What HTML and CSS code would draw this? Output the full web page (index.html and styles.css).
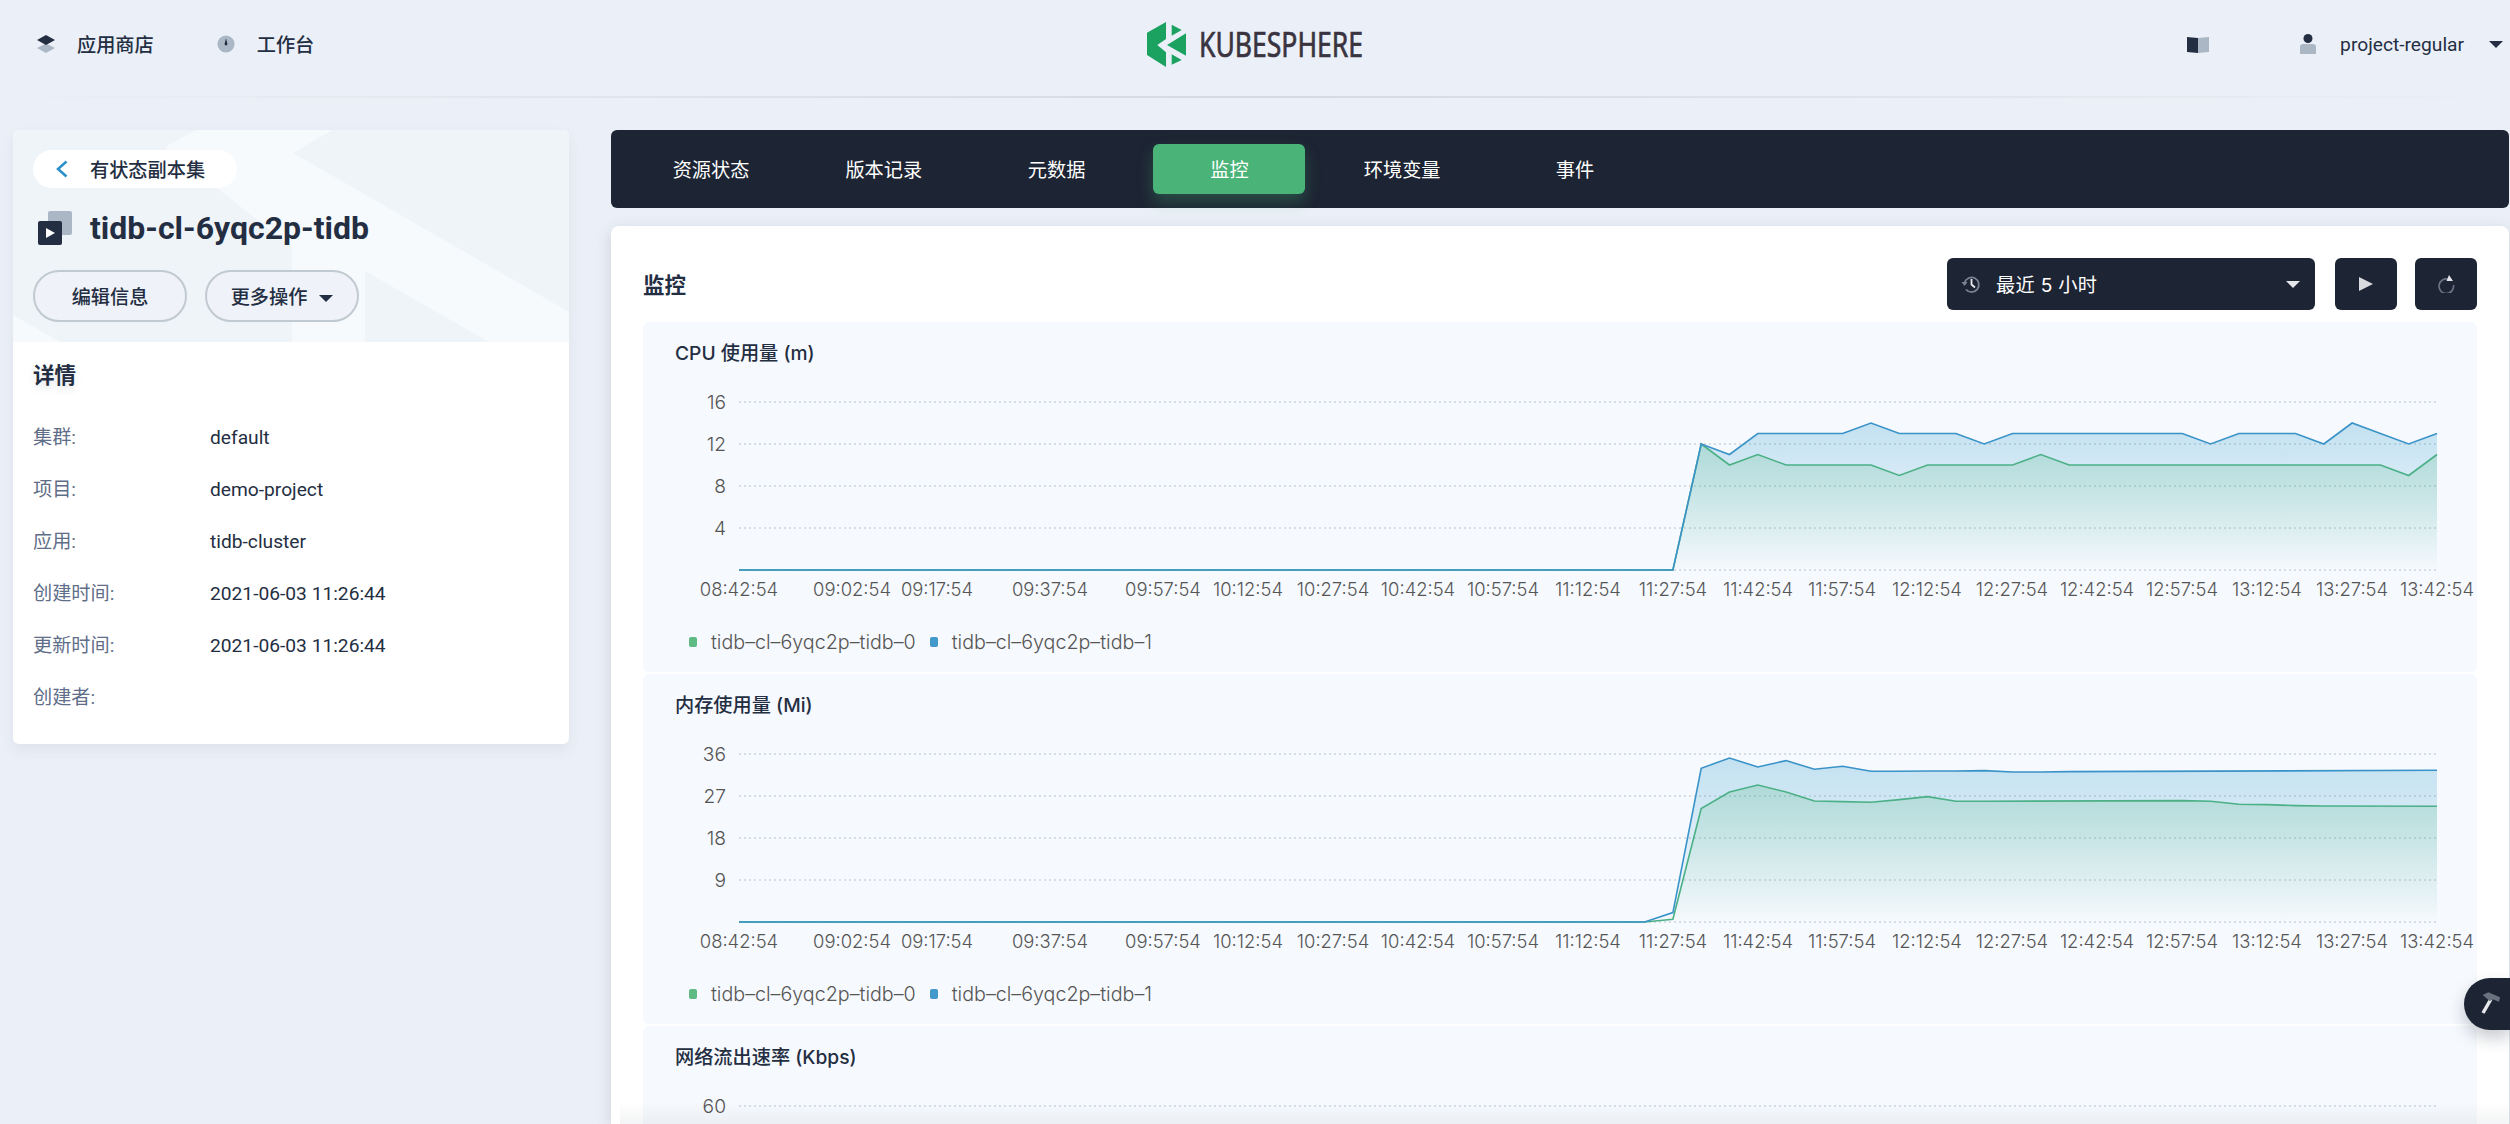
FILE: index.html
```html
<!DOCTYPE html>
<html lang="en">
<head>
    <meta charset="UTF-8">
    <meta name="viewport" content="width=device-width, initial-scale=1.0">
    <title>tidb-cl-6yqc2p-tidb</title>
    <link rel="stylesheet" href="styles.css">
</head>
<body>

    <header class="topbar">
        <nav class="topbar-left">
            <a class="top-link">
                <svg class="top-icon" viewBox="0 0 20 18">
                    <path d="M10 8.6 1 13l9 5 9-5z" fill="#abb7c5"/>
                    <path d="M10 0 1 5l9 5 9-5z" fill="#242e42"/>
                </svg>
                <span>应用商店</span>
            </a>
            <a class="top-link">
                <svg class="top-icon" viewBox="0 0 20 20">
                    <circle cx="10" cy="10" r="9.5" fill="#abb7c5"/>
                    <path d="M10 3.5 11.6 10a1.6 1.6 0 1 1-3.2 0z" fill="#242e42"/>
                </svg>
                <span>工作台</span>
            </a>
        </nav>

        <div class="logo">
            <svg class="logo-mark" viewBox="0 0 40 45">
                <path d="M19 0 0 10.7V33L19 45V30.300L10.300 23 19 17z" fill="#1ba160"/>
                <path d="M24.700 2.700 34.700 8 24.700 13.700z" fill="#1ba160"/>
                <path d="M39 11.300V33.700L20 23z" fill="#1ba160"/>
                <path d="M24.700 32.300 34.700 38 24.700 42.700z" fill="#1ba160"/>
            </svg>
            <span class="logo-text">KUBESPHERE</span>
        </div>

        <div class="topbar-right">
            <svg class="book-icon" viewBox="0 0 22 17">
                <path d="M0 1 11 2v15L0 16z" fill="#242e42"/>
                <path d="M11 2 22 1v15l-11 1z" fill="#abb7c5"/>
            </svg>
            <svg class="user-icon" viewBox="0 0 16 20">
                <circle cx="8" cy="4.5" r="4.5" fill="#242e42"/>
                <path d="M0 13q0-3 3-3h10q3 0 3 3v7H0z" fill="#abb7c5"/>
            </svg>
            <span class="user-name">project-regular</span>
            <span class="caret caret-dark"></span>
        </div>
    </header>

    <main class="page">
        <aside class="side">
            <section class="side-head">
                <svg class="side-bg" viewBox="0 0 556 212" preserveAspectRatio="none">
                    <path d="M183 0H319L280 23 556 182V212H476L352 141V212H279V117L152 17z" fill="#f6fafd"/>
                    <path d="M0 185 47 212H0z" fill="#f6fafd"/>
                </svg>
                <a class="back-pill">
                    <svg class="back-icon" viewBox="0 0 12 18">
                        <path d="M10.5 1.5 2 9l8.500 7.500" fill="none" stroke="#2b8fc9" stroke-width="2.5"/>
                    </svg>
                    <span>有状态副本集</span>
                </a>
                <div class="side-title">
                    <svg class="title-icon" viewBox="0 0 34 34">
                        <rect x="10" y="0" width="24" height="24" rx="2" fill="#abb7c5"/>
                        <rect x="0" y="10" width="24" height="24" rx="2" fill="#242e42"/>
                        <path d="M8 17 17 22 8 27z" fill="#fff"/>
                    </svg>
                    <h1>tidb-cl-6yqc2p-tidb</h1>
                </div>
                <div class="side-actions">
                    <button class="pill-btn">编辑信息</button>
                    <button class="pill-btn">更多操作<span class="caret caret-dark caret-btn"></span></button>
                </div>
            </section>
            <section class="details">
                <h3>详情</h3>
                <dl>
                    <div class="row"><dt>集群:</dt><dd>default</dd></div>
                    <div class="row"><dt>项目:</dt><dd>demo-project</dd></div>
                    <div class="row"><dt>应用:</dt><dd>tidb-cluster</dd></div>
                    <div class="row"><dt>创建时间:</dt><dd>2021-06-03 11:26:44</dd></div>
                    <div class="row"><dt>更新时间:</dt><dd>2021-06-03 11:26:44</dd></div>
                    <div class="row"><dt>创建者:</dt><dd></dd></div>
                </dl>
            </section>
        </aside>

        <div class="content">
            <nav class="tabs">
                <a class="tab">资源状态</a>
                <a class="tab">版本记录</a>
                <a class="tab">元数据</a>
                <a class="tab active">监控</a>
                <a class="tab">环境变量</a>
                <a class="tab">事件</a>
            </nav>

            <section class="card">
                <div class="card-head">
                    <h2>监控</h2>
                    <div class="controls">
                        <div class="time-select">
                            <svg class="clock" viewBox="0 0 20 20">
                                <path d="M3.600 8.500A7.300 7.300 0 1 1 5 15.500" fill="none" stroke="#7b8391" stroke-width="1.8"/>
                                <path d="M0.500 8 6.500 8 3.500 12z" fill="#7b8391"/>
                                <path d="M10.500 5V10.500L14 13.500" fill="none" stroke="#e8eaed" stroke-width="1.8"/>
                            </svg>
                            <span class="time-text">最近 5 小时</span>
                            <span class="caret caret-light caret-end"></span>
                        </div>
                        <button class="icon-btn">
                            <svg class="play" viewBox="0 0 14 14"><path d="M0 0 14 7 0 14z" fill="#d8dadd"/></svg>
                        </button>
                        <button class="icon-btn">
                            <svg class="refresh" viewBox="0 0 18 18">
                                <path d="M11.500 4.200A7.300 7.300 0 1 0 16.500 10" fill="none" stroke="#6d7585" stroke-width="1.6"/>
                                <path d="M12 0 16 6H9.500z" fill="#e4e6ea"/>
                            </svg>
                        </button>
                    </div>
                </div>

                <div class="panel">
                    <div class="panel-title">CPU 使用量 (m)</div>
                    <svg class="chart" viewBox="0 0 1834 230">
                        <defs>
                            <linearGradient id="fillBlue" x1="0" y1="0" x2="0" y2="1">
                                <stop offset="0" stop-color="#329dce" stop-opacity="0.26"/>
                                <stop offset="1" stop-color="#329dce" stop-opacity="0"/>
                            </linearGradient>
                            <linearGradient id="fillGreen" x1="0" y1="0" x2="0" y2="1">
                                <stop offset="0" stop-color="#4ab377" stop-opacity="0.22"/>
                                <stop offset="1" stop-color="#4ab377" stop-opacity="0"/>
                            </linearGradient>
                        </defs>
                        <g class="grid">
                            <line x1="96" x2="1794" y1="22" y2="22"/>
                            <line x1="96" x2="1794" y1="64" y2="64"/>
                            <line x1="96" x2="1794" y1="106" y2="106"/>
                            <line x1="96" x2="1794" y1="148" y2="148"/>
                            <line x1="96" x2="1794" y1="190" y2="190"/>
                        </g>
                        <g class="y-axis">
                            <text x="83" y="29">16</text>
                            <text x="83" y="71">12</text>
                            <text x="83" y="113">8</text>
                            <text x="83" y="155">4</text>
                        </g>
                        <path d="M1029.900,190L1058.200,64L1086.500,74.500L1114.800,53.500L1143.100,53.500L1171.400,53.500L1199.700,53.500L1228,43L1256.300,53.500L1284.600,53.500L1312.900,53.500L1341.200,64L1369.500,53.500L1397.800,53.500L1426.100,53.500L1454.400,53.500L1482.700,53.500L1511,53.500L1539.300,53.500L1567.600,64L1595.900,53.500L1624.200,53.500L1652.500,53.500L1680.800,64L1709.100,43L1737.400,53.500L1765.700,64L1794,53.500V190z" fill="url(#fillBlue)"/>
                        <path d="M1029.900,190L1058.200,64L1086.500,85L1114.800,74.500L1143.100,85L1171.400,85L1199.700,85L1228,85L1256.300,95.500L1284.600,85L1312.900,85L1341.200,85L1369.500,85L1397.800,74.500L1426.100,85L1454.400,85L1482.700,85L1511,85L1539.300,85L1567.600,85L1595.900,85L1624.200,85L1652.500,85L1680.800,85L1709.100,85L1737.400,85L1765.700,95.500L1794,74.500V190z" fill="url(#fillGreen)"/>
                        <path class="line-green" d="M96,190H1029.900L1058.200,64L1086.500,85L1114.800,74.500L1143.100,85L1171.400,85L1199.700,85L1228,85L1256.300,95.500L1284.600,85L1312.900,85L1341.200,85L1369.500,85L1397.800,74.500L1426.100,85L1454.400,85L1482.700,85L1511,85L1539.300,85L1567.600,85L1595.900,85L1624.200,85L1652.500,85L1680.800,85L1709.100,85L1737.400,85L1765.700,95.500L1794,74.500"/>
                        <path class="line-blue" d="M96,190H1029.900L1058.200,64L1086.500,74.500L1114.800,53.500L1143.100,53.500L1171.400,53.500L1199.700,53.500L1228,43L1256.300,53.500L1284.600,53.500L1312.900,53.500L1341.200,64L1369.500,53.500L1397.800,53.500L1426.100,53.500L1454.400,53.500L1482.700,53.500L1511,53.500L1539.300,53.500L1567.600,64L1595.900,53.500L1624.200,53.500L1652.500,53.500L1680.800,64L1709.100,43L1737.400,53.500L1765.700,64L1794,53.500"/>
                        <g class="x-axis">
                            <text x="96" y="216">08:42:54</text>
                            <text x="209" y="216">09:02:54</text>
                            <text x="294" y="216">09:17:54</text>
                            <text x="407" y="216">09:37:54</text>
                            <text x="520" y="216">09:57:54</text>
                            <text x="605" y="216">10:12:54</text>
                            <text x="690" y="216">10:27:54</text>
                            <text x="775" y="216">10:42:54</text>
                            <text x="860" y="216">10:57:54</text>
                            <text x="945" y="216">11:12:54</text>
                            <text x="1030" y="216">11:27:54</text>
                            <text x="1115" y="216">11:42:54</text>
                            <text x="1199" y="216">11:57:54</text>
                            <text x="1284" y="216">12:12:54</text>
                            <text x="1369" y="216">12:27:54</text>
                            <text x="1454" y="216">12:42:54</text>
                            <text x="1539" y="216">12:57:54</text>
                            <text x="1624" y="216">13:12:54</text>
                            <text x="1709" y="216">13:27:54</text>
                            <text x="1794" y="216">13:42:54</text>
                        </g>
                    </svg>
                    <div class="legend">
                        <span class="dot dot-green"></span><span class="legend-name">tidb–cl–6yqc2p–tidb–0</span>
                        <span class="dot dot-blue"></span><span class="legend-name">tidb–cl–6yqc2p–tidb–1</span>
                    </div>
                </div>

                <div class="panel">
                    <div class="panel-title">内存使用量 (Mi)</div>
                    <svg class="chart" viewBox="0 0 1834 230">
                        <g class="grid">
                            <line x1="96" x2="1794" y1="22" y2="22"/>
                            <line x1="96" x2="1794" y1="64" y2="64"/>
                            <line x1="96" x2="1794" y1="106" y2="106"/>
                            <line x1="96" x2="1794" y1="148" y2="148"/>
                            <line x1="96" x2="1794" y1="190" y2="190"/>
                        </g>
                        <g class="y-axis">
                            <text x="83" y="29">36</text>
                            <text x="83" y="71">27</text>
                            <text x="83" y="113">18</text>
                            <text x="83" y="155">9</text>
                        </g>
                        <path d="M1001.600,190L1029.900,180.600L1058.200,36.300L1086.500,26L1114.800,35L1143.100,28.600L1171.400,37.300L1199.700,34.300L1228,39.300L1256.300,39.300L1284.600,39L1312.900,39L1341.200,38.600L1369.500,40L1397.800,40L1426.100,39.600L1794,38.300V190z" fill="url(#fillBlue)"/>
                        <path d="M1001.600,190L1029.900,187.300L1058.200,76.600L1086.500,60L1114.800,53L1143.100,60L1171.400,69L1199.700,69.600L1228,70.300L1256.300,67.600L1284.600,64.600L1312.900,69.300L1341.200,69.300L1539.300,68.600L1567.600,69.300L1595.900,72.300L1624.200,72.600L1652.500,73.600L1680.800,74L1794,74.300V190z" fill="url(#fillGreen)"/>
                        <path class="line-green" d="M96,190H1001.600L1029.900,187.300L1058.200,76.600L1086.500,60L1114.800,53L1143.100,60L1171.400,69L1199.700,69.600L1228,70.300L1256.300,67.600L1284.600,64.600L1312.900,69.300L1341.200,69.300L1539.300,68.600L1567.600,69.300L1595.900,72.300L1624.200,72.600L1652.500,73.600L1680.800,74L1794,74.300"/>
                        <path class="line-blue" d="M96,190H1001.600L1029.900,180.600L1058.200,36.300L1086.500,26L1114.800,35L1143.100,28.600L1171.400,37.300L1199.700,34.300L1228,39.300L1256.300,39.300L1284.600,39L1312.900,39L1341.200,38.600L1369.500,40L1397.800,40L1426.100,39.600L1794,38.300"/>
                        <g class="x-axis">
                            <text x="96" y="216">08:42:54</text>
                            <text x="209" y="216">09:02:54</text>
                            <text x="294" y="216">09:17:54</text>
                            <text x="407" y="216">09:37:54</text>
                            <text x="520" y="216">09:57:54</text>
                            <text x="605" y="216">10:12:54</text>
                            <text x="690" y="216">10:27:54</text>
                            <text x="775" y="216">10:42:54</text>
                            <text x="860" y="216">10:57:54</text>
                            <text x="945" y="216">11:12:54</text>
                            <text x="1030" y="216">11:27:54</text>
                            <text x="1115" y="216">11:42:54</text>
                            <text x="1199" y="216">11:57:54</text>
                            <text x="1284" y="216">12:12:54</text>
                            <text x="1369" y="216">12:27:54</text>
                            <text x="1454" y="216">12:42:54</text>
                            <text x="1539" y="216">12:57:54</text>
                            <text x="1624" y="216">13:12:54</text>
                            <text x="1709" y="216">13:27:54</text>
                            <text x="1794" y="216">13:42:54</text>
                        </g>
                    </svg>
                    <div class="legend">
                        <span class="dot dot-green"></span><span class="legend-name">tidb–cl–6yqc2p–tidb–0</span>
                        <span class="dot dot-blue"></span><span class="legend-name">tidb–cl–6yqc2p–tidb–1</span>
                    </div>
                </div>

                <div class="panel">
                    <div class="panel-title">网络流出速率 (Kbps)</div>
                    <svg class="chart chart-cut" viewBox="0 0 1834 40">
                        <g class="grid">
                            <line x1="96" x2="1794" y1="22" y2="22"/>
                        </g>
                        <g class="y-axis">
                            <text x="83" y="29">60</text>
                        </g>
                    </svg>
                </div>
            </section>
        </div>
    </main>

    <div class="bottom-fade"></div>

    <button class="tool-btn">
        <svg viewBox="0 0 20 24">
            <path d="M3 21 11 7" fill="none" stroke="#e6e8ec" stroke-width="3.5"/>
            <path d="M2.700 3 8.300 0.300 20 5.300 19 9.700 12.700 7.300 10 9.300z" fill="#6a7280"/>
        </svg>
    </button>

</body>
</html>
```

FILE: styles.css
```css
* {
    box-sizing: border-box;
}

html, body {
    height: 1124px;
    overflow: hidden;
}

body {
    margin: 0;
    font-family: Roboto, "Noto Sans CJK SC", sans-serif;
    font-size: 19.2px;
    color: #242e42;
    background-color: #ebf0f8;
}

/* top bar */
.topbar {
    position: relative;
    height: 98px;
    padding: 0 7px 10px 36px;
    display: flex;
    align-items: center;
    justify-content: space-between;
}

.topbar::after {
    content: "";
    position: absolute;
    left: 0;
    right: 0;
    bottom: 0;
    height: 2px;
    background: linear-gradient(90deg, #ebf0f8 0%, #e4e9f0 15%, #d4dae3 50%, #e4e9f0 85%, #ebf0f8 100%);
}

.topbar-left {
    display: flex;
    gap: 62px;
}

.top-link {
    display: flex;
    align-items: center;
    gap: 21px;
    font-weight: 500;
}

.top-icon {
    width: 20px;
    height: 18px;
}

.logo {
    position: absolute;
    left: 1147px;
    top: 22px;
    display: flex;
    align-items: center;
    gap: 12px;
}

.logo-mark {
    width: 40px;
    height: 45px;
}

.logo-text {
    font-family: "Noto Sans", sans-serif;
    font-size: 34px;
    line-height: 45px;
    color: #3a3440;
    -webkit-text-stroke: 0.7px #3a3440;
    transform: scaleX(0.78);
    transform-origin: left center;
}

.topbar-right {
    display: flex;
    align-items: center;
}

.book-icon {
    width: 22px;
    height: 17px;
    margin-right: 91px;
}

.user-icon {
    width: 16px;
    height: 20px;
    margin-right: 24px;
}

.user-name {
    margin-right: 25px;
}

.caret {
    display: inline-block;
    width: 0;
    height: 0;
    border-left: 7.5px solid transparent;
    border-right: 7.5px solid transparent;
}

.caret-dark {
    border-top: 7.5px solid #242e42;
}

.caret-light {
    border-top: 7.5px solid #e4e6ea;
}

/* page */
.page {
    display: flex;
    gap: 42px;
    padding: 32px 1px 0 13px;
}

.side {
    width: 556px;
    flex-shrink: 0;
    height: 614px;
    border-radius: 6px;
    overflow: hidden;
    background-color: #fff;
    box-shadow: 0 6px 14px rgba(36, 46, 66, 0.07);
}

.side-head {
    position: relative;
    height: 212px;
    padding: 20px 20px 0;
    background-color: #eff4f9;
}

.side-bg {
    position: absolute;
    left: 0;
    top: 0;
    width: 100%;
    height: 100%;
}

.back-pill {
    position: relative;
    display: flex;
    align-items: center;
    width: 204px;
    height: 38px;
    padding-left: 23px;
    border-radius: 19px;
    background-color: #fff;
    font-weight: 500;
}

.back-icon {
    width: 12px;
    height: 18px;
    margin-right: 22px;
}

.side-title {
    position: relative;
    display: flex;
    align-items: center;
    height: 34px;
    margin-top: 23px;
    padding-left: 5px;
}

.title-icon {
    width: 34px;
    height: 34px;
    margin-right: 18px;
}

.side-title h1 {
    margin: 0;
    font-size: 32px;
    font-weight: 700;
    line-height: 36px;
}

.side-actions {
    position: relative;
    display: flex;
    gap: 18px;
    margin-top: 25px;
}

.pill-btn {
    width: 154px;
    height: 52px;
    padding: 0;
    border: 2px solid #c1c9d1;
    border-radius: 26px;
    background-color: #eff3f9;
    font-family: inherit;
    font-size: 19.2px;
    font-weight: 500;
    color: #242e42;
}

.caret-btn {
    margin-left: 12px;
    vertical-align: 2px;
}

.details {
    padding: 20px 20px 0;
}

.details h3 {
    margin: 0 0 34px;
    font-size: 21.5px;
    font-weight: 700;
    line-height: 28px;
    text-shadow: 0 4px 8px rgba(36, 46, 66, 0.12);
}

.details dl {
    margin: 0;
}

.row {
    display: flex;
    height: 52px;
    line-height: 28px;
}

.row dt {
    width: 177px;
    color: #5f6e88;
}

.row dd {
    margin: 0;
}

/* right column */
.content {
    flex: 1;
    min-width: 0;
}

.tabs {
    display: flex;
    gap: 20.8px;
    height: 78px;
    padding: 14px 24px;
    margin-bottom: 18px;
    border-radius: 6px;
    background-color: #1d2433;
}

.tab {
    width: 152px;
    height: 50px;
    line-height: 54px;
    text-align: center;
    border-radius: 6px;
    color: #fff;
}

.tab.active {
    background-color: #4ab377;
    box-shadow: 0 8px 16px rgba(74, 179, 119, 0.3);
}

.card {
    position: relative;
    padding: 32px 32px 0;
    height: 898px;
    overflow: hidden;
    border-radius: 8px 8px 0 0;
    background-color: #fff;
    box-shadow: 0 4px 16px rgba(36, 46, 66, 0.16);
}

.card-head {
    display: flex;
    align-items: center;
    justify-content: space-between;
    height: 52px;
    margin-bottom: 12px;
}

.card-head h2 {
    margin: 0 0 2px;
    font-size: 21.5px;
    font-weight: 700;
}

.controls {
    display: flex;
    gap: 18px;
}

.time-select {
    display: flex;
    align-items: center;
    width: 368px;
    height: 52px;
    padding: 0 15px 0 14px;
    margin-right: 2px;
    border-radius: 6px;
    background-color: #1d2433;
    color: #fff;
}

.clock {
    width: 20px;
    height: 20px;
    margin-right: 15px;
}

.time-text {
    font-family: Inter, "Noto Sans CJK SC", sans-serif;
    letter-spacing: 0.3px;
}

.caret-end {
    margin-left: auto;
}

.icon-btn {
    display: flex;
    align-items: center;
    justify-content: center;
    width: 62px;
    height: 52px;
    padding: 0;
    border: none;
    border-radius: 6px;
    background-color: #1d2433;
}

.play {
    width: 14px;
    height: 14px;
}

.refresh {
    width: 18px;
    height: 18px;
}

.panel {
    height: 350px;
    margin-bottom: 2px;
    padding-top: 20px;
    border-radius: 6px;
    background-color: #f6f9fd;
}

.panel-title {
    height: 22px;
    margin: 0 0 16px 32px;
    font-family: Inter, "Noto Sans CJK SC", sans-serif;
    line-height: 22px;
    font-weight: 500;
}

.chart {
    display: block;
    width: 1834px;
    height: 230px;
}

.chart-cut {
    height: 40px;
}

.grid line {
    stroke: #d6dce3;
    stroke-width: 2;
    stroke-dasharray: 2 3;
}

.y-axis text {
    font-family: Inter, sans-serif;
    font-size: 19.2px;
    font-weight: 300;
    fill: #555;
    text-anchor: end;
}

.x-axis text {
    font-family: Inter, sans-serif;
    font-size: 18.4px;
    font-weight: 300;
    fill: #555;
    text-anchor: middle;
}

.line-blue,
.line-green {
    fill: none;
    stroke-width: 1.6;
}

.line-blue {
    stroke: #3a93c8;
}

.line-green {
    stroke: #4bb086;
}

.legend {
    display: flex;
    align-items: center;
    height: 24px;
    margin: 20px 0 0 46px;
    font-family: Inter, sans-serif;
    font-size: 19.7px;
    font-weight: 300;
    color: #555;
}

.dot {
    width: 8px;
    height: 10px;
    margin-right: 14px;
    border-radius: 2px;
}

.dot-green {
    background-color: #5fbb84;
}

.dot-blue {
    background-color: #4399cc;
}

.legend-name {
    margin-right: 14px;
}

.bottom-fade {
    position: absolute;
    left: 620px;
    right: 0;
    bottom: 0;
    height: 22px;
    background: linear-gradient(180deg, rgba(36, 46, 66, 0), rgba(36, 46, 66, 0.05));
}

.tool-btn {
    position: absolute;
    right: 0;
    top: 978px;
    display: flex;
    align-items: center;
    justify-content: flex-start;
    width: 46px;
    height: 52px;
    padding: 0 0 0 16px;
    border: none;
    border-radius: 26px 0 0 26px;
    background-color: #1d2433;
    box-shadow: 0 8px 16px rgba(36, 46, 66, 0.25);
}

.tool-btn svg {
    width: 20px;
    height: 24px;
}
```
